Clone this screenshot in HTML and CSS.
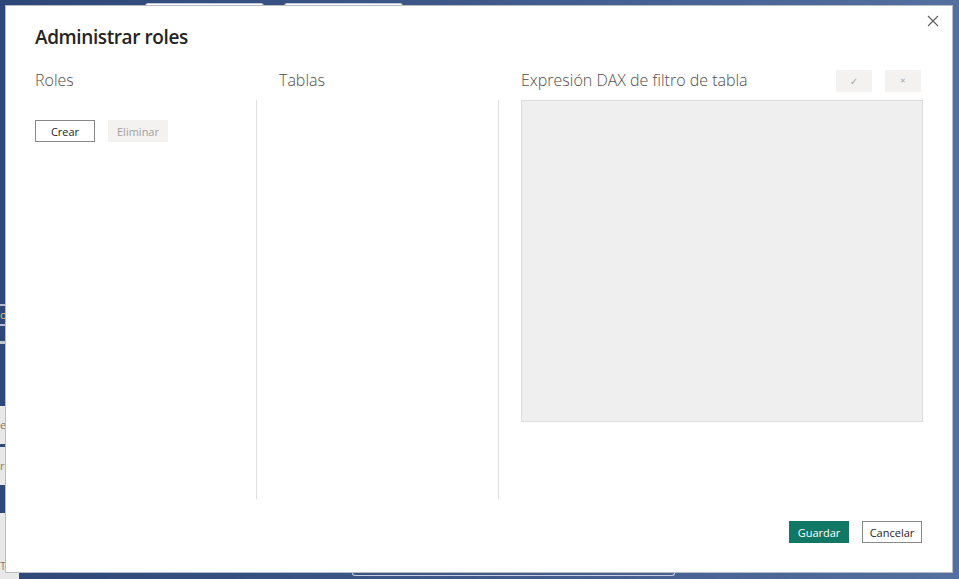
FILE: index.html
```html
<!DOCTYPE html>
<html lang="es">
<head>
    <meta charset="UTF-8">
    <title>Administrar roles</title>
    <link rel="stylesheet" href="styles.css">
</head>
<body>
    <!-- ventana de fondo (solo se ven los bordes) -->
    <div class="backdrop">
        <div class="tabs">
            <span class="tab"></span>
            <span class="tab"></span>
        </div>
        <div class="side">
            <div class="side-item dark">o</div>
            <div class="side-item gap"></div>
            <div class="side-item light">es</div>
            <div class="side-item light">re</div>
            <div class="side-item spacer"></div>
            <div class="side-item light tall">T</div>
        </div>
        <div class="bottom-bar">
            <span class="bottom-corner"></span>
            <span class="bottom-pill"></span>
        </div>
    </div>

    <div class="dialog">
        <button class="close" title="Cerrar">
            <svg width="12" height="12" viewBox="0 0 12 12">
                <path d="M1 1 L11 11 M11 1 L1 11" stroke="#5c5c5c" stroke-width="1.1" fill="none"/>
            </svg>
        </button>

        <h1 class="title">Administrar roles</h1>

        <div class="panels">
            <div class="head">Roles</div>
            <div class="head">Tablas</div>
            <div class="head head-dax">
                <span>Expresión DAX de filtro de tabla</span>
                <div class="dax-actions">
                    <button class="icon-btn">&#10003;</button>
                    <button class="icon-btn small">&#10005;</button>
                </div>
            </div>

            <div class="panel">
                <div class="role-actions">
                    <button class="btn">Crear</button>
                    <button class="btn disabled">Eliminar</button>
                </div>
            </div>
            <div class="panel bordered"></div>
            <div class="panel bordered">
                <div class="dax-box"></div>
            </div>
        </div>

        <div class="footer">
            <button class="btn primary">Guardar</button>
            <button class="btn">Cancelar</button>
        </div>
    </div>
</body>
</html>
```

FILE: styles.css
```css
body {
    margin: 0;
    width: 959px;
    height: 579px;
    overflow: hidden;
    position: relative;
    font-family: 'Segoe UI', 'Open Sans', 'Noto Sans', sans-serif;
    background: linear-gradient(90deg, #2d4878 0%, #3f5a8a 50%, #5470a0 100%);
    color: #252423;
}

/* fondo */
.backdrop {
    height: 100%;
    display: flex;
    flex-direction: column;
}

.tabs {
    display: flex;
    gap: 20px;
    padding: 3px 0 0 145px;
}

.tab {
    width: 117px;
    height: 8px;
    background: #fff;
    border: 1px solid #c6c9d2;
    border-radius: 3px 3px 0 0;
}

.side {
    margin-top: 291px;
    width: 19px;
    display: flex;
    flex-direction: column;
    font-size: 11px;
    line-height: 18px;
}

.side-item {
    color: #6c7ea0;
    text-align: right;
    padding-right: 13px;
}

.side-item.dark {
    height: 18px;
    border-top: 2px solid #b8bfcc;
    border-bottom: 2px solid #b8bfcc;
    color: #e8c27a;
}

.side-item.gap {
    height: 62px;
    margin-top: 15px;
    border-top: 3px solid #c0c4cc;
}

.side-item.light {
    background: #e8e8e8;
    height: 38px;
    line-height: 38px;
    margin-bottom: 3px;
    color: #8a7a66;
}

.side-item.spacer {
    height: 25px;
}

.side-item.light.tall {
    height: 60px;
    margin-bottom: 0;
    line-height: 14px;
    display: flex;
    align-items: flex-end;
    justify-content: flex-end;
}

.bottom-bar {
    height: 6px;
    display: flex;
}

.bottom-corner {
    width: 19px;
    background: #e8e8e8;
}

.bottom-pill {
    margin-left: 333px;
    width: 321px;
    height: 2px;
    border: 1px solid #c8cfdc;
    border-top: none;
    border-radius: 0 0 6px 6px;
}

/* dialogo */
.dialog {
    position: absolute;
    left: 5px;
    top: 5px;
    width: 948px;
    height: 568px;
    box-sizing: border-box;
    background: #fff;
    border: 1px solid #b9bcc4;
    padding: 0 29px 0 29px;
    display: flex;
    flex-direction: column;
}

.close {
    position: absolute;
    right: 9px;
    top: 5px;
    width: 20px;
    height: 20px;
    border: none;
    background: none;
    padding: 0;
    display: flex;
    align-items: center;
    justify-content: center;
}

.title {
    margin: 17px 0 0;
    font-size: 19px;
    line-height: 28px;
    font-weight: 600;
    letter-spacing: -0.4px;
    color: #252423;
}

.panels {
    margin-top: 19px;
    display: grid;
    grid-template-columns: 221px 242px 1fr;
    grid-template-rows: 30px 399px;
}

.head {
    font-size: 16px;
    font-weight: 300;
    line-height: 20px;
    color: #4f4d4b;
}

.head + .head {
    padding-left: 23px;
}

.head-dax {
    display: flex;
    justify-content: space-between;
    align-items: flex-start;
}

.dax-actions {
    display: flex;
    gap: 13px;
    margin-right: 2px;
}

.icon-btn {
    width: 36px;
    height: 22px;
    border: none;
    background: #f3f2f1;
    color: #a8a6a4;
    font-size: 10px;
    padding: 0;
    font-family: 'DejaVu Sans', sans-serif;
}

.icon-btn.small {
    font-size: 7px;
}

.panel.bordered {
    border-left: 1px solid #e1dfdd;
    padding-left: 22px;
}

.role-actions {
    display: flex;
    gap: 13px;
    margin-top: 20px;
}

.btn {
    width: 60px;
    height: 22px;
    box-sizing: border-box;
    border: 1px solid #8a8886;
    background: #fff;
    color: #252423;
    font-family: inherit;
    font-size: 11px;
    padding: 0;
}

.btn.disabled {
    border-color: #f3f2f1;
    background: #f3f2f1;
    color: #a19f9d;
}

.btn.primary {
    border-color: #117865;
    background: #117865;
    color: #fff;
}

.dax-box {
    height: 322px;
    box-sizing: border-box;
    background: #efefef;
    border: 1px solid #dcdcdc;
}

.footer {
    margin-top: 22px;
    display: flex;
    justify-content: flex-end;
    gap: 13px;
    margin-right: 1px;
}
```
